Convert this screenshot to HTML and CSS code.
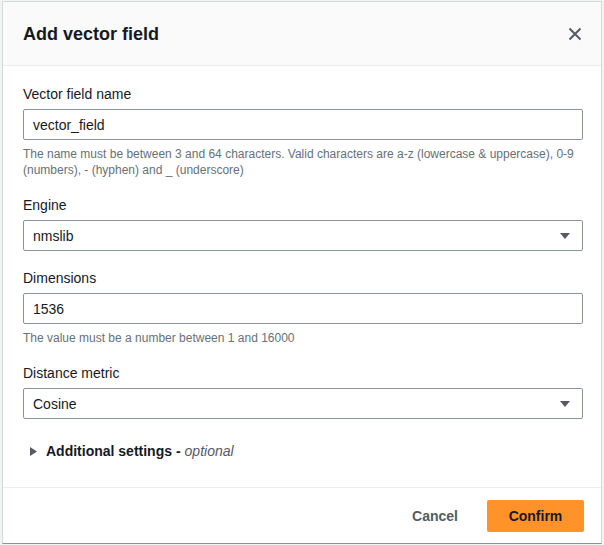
FILE: index.html
```html
<!DOCTYPE html>
<html lang="en">
<head>
<meta charset="utf-8">
<title>Add vector field</title>
<link rel="stylesheet" href="styles.css">
</head>
<body>
<div class="modal">
  <header class="modal-header">
    <h2 class="modal-title">Add vector field</h2>
    <button class="close" aria-label="Close">
      <svg width="14" height="14" viewBox="0 0 14 14"><path d="M1.5 1.5 L12.5 12.5 M12.5 1.5 L1.5 12.5" stroke="#545b64" stroke-width="2" fill="none"/></svg>
    </button>
  </header>
  <div class="modal-body">
    <div class="field">
      <label class="label">Vector field name</label>
      <div class="control"><span class="value">vector_field</span></div>
      <div class="hint">The name must be between 3 and 64 characters. Valid characters are a-z (lowercase &amp; uppercase), 0-9<br>(numbers), - (hyphen) and _ (underscore)</div>
    </div>
    <div class="field">
      <label class="label">Engine</label>
      <div class="control select"><span class="value">nmslib</span>
        <svg class="caret" width="12" height="8" viewBox="0 0 12 8"><path d="M1 1 H11 L6 7 Z" fill="#545b64"/></svg>
      </div>
    </div>
    <div class="field">
      <label class="label">Dimensions</label>
      <div class="control"><span class="value">1536</span></div>
      <div class="hint">The value must be a number between 1 and 16000</div>
    </div>
    <div class="field">
      <label class="label">Distance metric</label>
      <div class="control select"><span class="value">Cosine</span>
        <svg class="caret" width="12" height="8" viewBox="0 0 12 8"><path d="M1 1 H11 L6 7 Z" fill="#545b64"/></svg>
      </div>
    </div>
    <div class="expander">
      <svg width="9" height="11" viewBox="0 0 9 11"><path d="M1 1 L8 5.5 L1 10 Z" fill="#545b64"/></svg>
      <span class="exp-title">Additional settings -</span><i class="exp-opt">optional</i>
    </div>
  </div>
  <footer class="modal-footer">
    <button class="btn-link">Cancel</button>
    <button class="btn-primary">Confirm</button>
  </footer>
</div>
</body>
</html>
```

FILE: styles.css
```css
* { box-sizing: border-box; }
html, body { margin: 0; padding: 0; }
body {
  background: #f2f3f3;
  font-family: "Liberation Sans", Arial, sans-serif;
  color: #16191f;
  width: 604px;
  height: 545px;
  overflow: hidden;
}
.modal {
  margin: 1px 0 0 2px;
  width: 600px;
  height: 543px;
  background: #fff;
  border: 1px solid #d5dbdb;
  border-bottom-color: #879596;
  display: flex;
  flex-direction: column;
}
.modal-header {
  height: 64px;
  background: #fafafa;
  border-bottom: 1px solid #eaeded;
  display: flex;
  align-items: center;
  justify-content: space-between;
  padding: 0 19px 0 20px;
}
.modal-title {
  margin: 0;
  font-size: 18px;
  font-weight: bold;
  line-height: 22px;
  color: #16191f;
}
.close {
  border: 0;
  background: none;
  padding: 0;
  width: 14px;
  height: 14px;
  display: flex;
}
.modal-body {
  flex: 1;
  padding: 17px 18px 0 20px;
  display: flex;
  flex-direction: column;
}
.field { display: flex; flex-direction: column; margin-bottom: 16px; }
.label {
  font-size: 14px;
  line-height: 22px;
  color: #16191f;
  margin-bottom: 4px;
}
.control {
  height: 31px;
  border: 1px solid #879596;
  border-radius: 2px;
  display: flex;
  align-items: center;
  padding: 0 12px 0 9px;
  font-size: 14px;
  color: #16191f;
}
.select { justify-content: space-between; }
.caret { margin-right: -1px; }
.hint {
  margin-top: 6px;
  font-size: 12px;
  line-height: 16px;
  color: #687078;
  white-space: nowrap;
}
.expander {
  display: flex;
  align-items: center;
  padding-left: 6px;
  margin-top: 5px;
  font-size: 14px;
  line-height: 22px;
}
.expander svg { margin-right: 8px; }
.exp-title { font-weight: bold; color: #16191f; margin-right: 4px; }
.exp-opt { color: #545b64; }
.modal-footer {
  height: 56px;
  border-top: 1px solid #eaeded;
  display: flex;
  align-items: center;
  justify-content: flex-end;
  gap: 11px;
  padding: 0 17px 0 0;
}
.btn-link {
  border: 0;
  background: none;
  font-family: inherit;
  font-size: 14px;
  font-weight: bold;
  color: #545b64;
  padding: 0 18px;
  height: 32px;
}
.btn-primary {
  border: 0;
  border-radius: 2px;
  background: #ff9229;
  color: #16191f;
  font-family: inherit;
  font-size: 14px;
  font-weight: bold;
  width: 97px;
  height: 32px;
}
```
